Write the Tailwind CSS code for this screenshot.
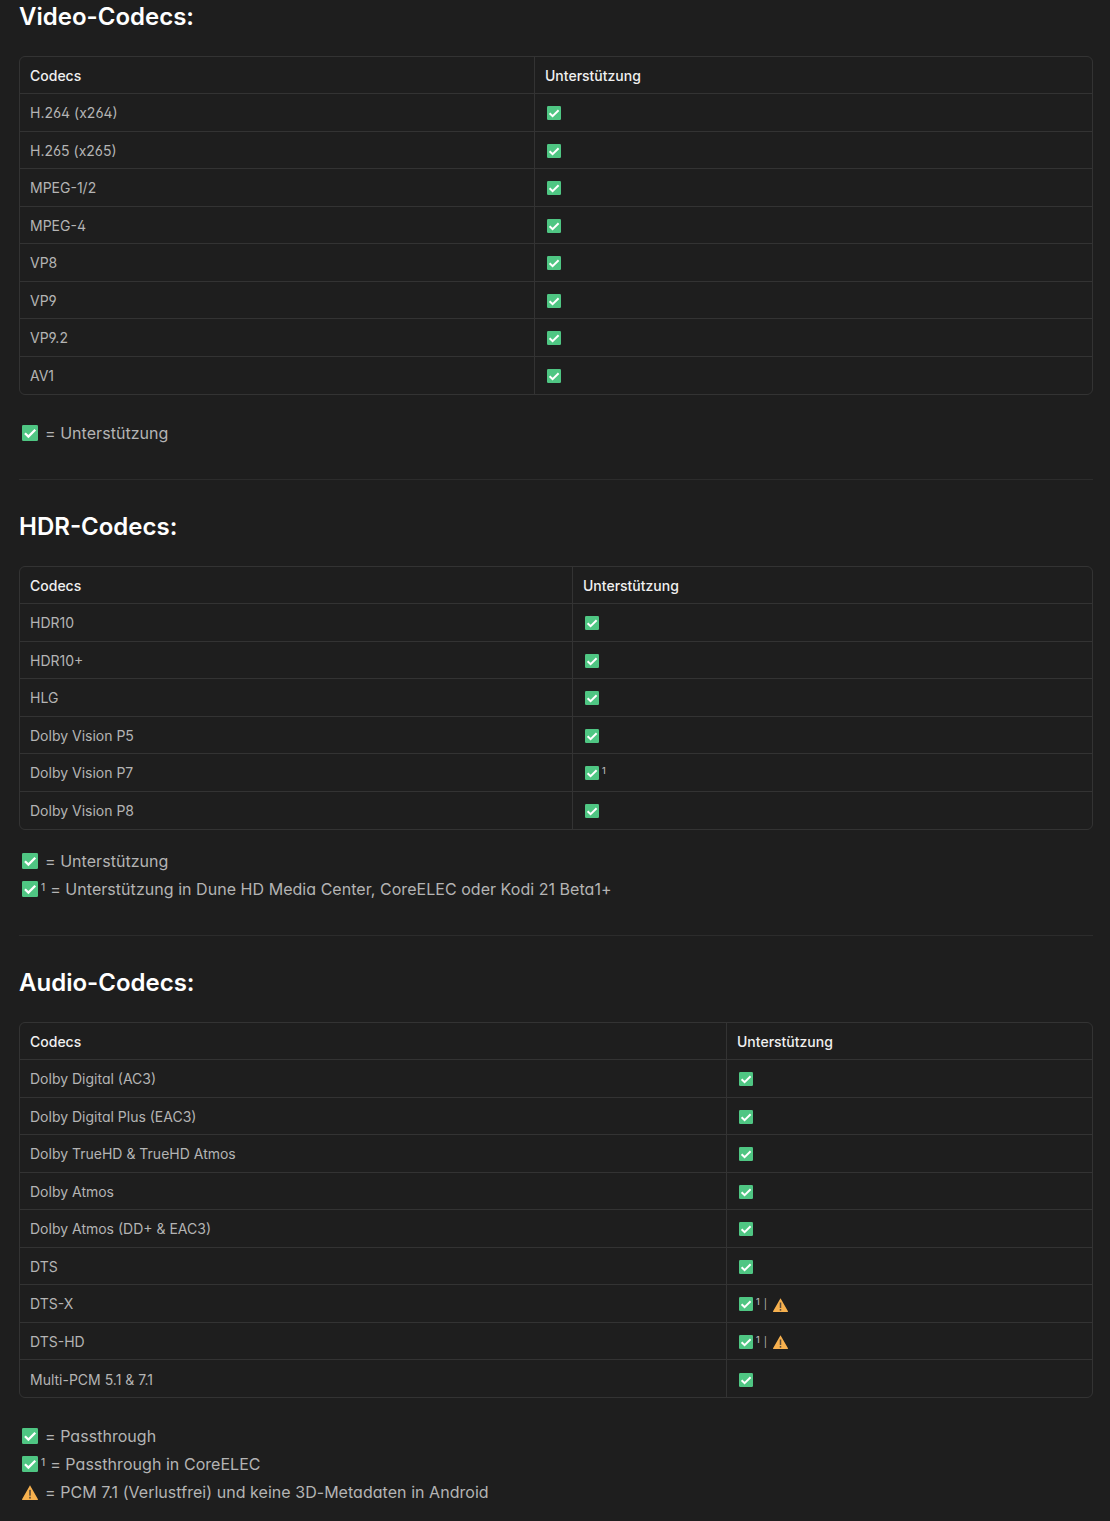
<!DOCTYPE html>
<html lang="de">
<head>
<meta charset="utf-8">
<title>Codecs</title>
<script src="https://cdn.jsdelivr.net/npm/@tailwindcss/browser@4"></script>
</head>
<body class="bg-[#1e1e1e] text-[#b4b4b4] [font-family:Inter,sans-serif] [font-feature-settings:'cv02','cv03','cv04','cv11']">
<svg class="hidden" aria-hidden="true">
  <symbol id="chk" viewBox="0 0 14 14"><rect width="14" height="14" rx="1.2" fill="#4fc683"/><path d="M2.6 7.2 5.6 10.2 11.6 4.2" fill="none" stroke="#fff" stroke-width="2"/></symbol>
  <symbol id="warn" viewBox="0 0 16 14" preserveAspectRatio="none"><path d="M8 .3 15.8 13a.6.6 0 0 1-.5 1H.7a.6.6 0 0 1-.5-1Z" fill="#f6b04e"/><rect x="7.2" y="4.5" width="1.6" height="5.5" fill="#5a4a3a"/><rect x="7.2" y="11" width="1.6" height="1.7" fill="#5a4a3a"/></symbol>
</svg>
<main class="h-[1521px] overflow-hidden pl-[19px] pr-[17px]">

<h2 class="h-8 text-2xl leading-[34px] font-semibold text-white">Video-Codecs:</h2>
<div class="mt-6 rounded-md border border-[#333]">
<table class="w-full table-fixed border-collapse text-sm">
  <colgroup><col class="w-[514px]"><col></colgroup>
  <thead><tr class="h-[36.5px] text-left text-[#f0f0f0]"><th class="px-2.5 pt-[2px] font-[550]">Codecs</th><th class="border-l border-[#333] pl-[10.5px] pt-[2px] font-[550]">Unterstützung</th></tr></thead>
  <tbody class="[&_td]:pt-[2px]">
    <tr class="h-[37.5px] border-t border-[#333]"><td class="px-2.5">H.264 (x264)</td><td class="border-l border-[#333] pl-[11px]"><svg class="ml-[1.5px] size-3.5"><use href="#chk"/></svg></td></tr>
    <tr class="h-[37.5px] border-t border-[#333]"><td class="px-2.5">H.265 (x265)</td><td class="border-l border-[#333] pl-[11px]"><svg class="ml-[1.5px] size-3.5"><use href="#chk"/></svg></td></tr>
    <tr class="h-[37.5px] border-t border-[#333]"><td class="px-2.5">MPEG-1/2</td><td class="border-l border-[#333] pl-[11px]"><svg class="ml-[1.5px] size-3.5"><use href="#chk"/></svg></td></tr>
    <tr class="h-[37.5px] border-t border-[#333]"><td class="px-2.5">MPEG-4</td><td class="border-l border-[#333] pl-[11px]"><svg class="ml-[1.5px] size-3.5"><use href="#chk"/></svg></td></tr>
    <tr class="h-[37.5px] border-t border-[#333]"><td class="px-2.5">VP8</td><td class="border-l border-[#333] pl-[11px]"><svg class="ml-[1.5px] size-3.5"><use href="#chk"/></svg></td></tr>
    <tr class="h-[37.5px] border-t border-[#333]"><td class="px-2.5">VP9</td><td class="border-l border-[#333] pl-[11px]"><svg class="ml-[1.5px] size-3.5"><use href="#chk"/></svg></td></tr>
    <tr class="h-[37.5px] border-t border-[#333]"><td class="px-2.5">VP9.2</td><td class="border-l border-[#333] pl-[11px]"><svg class="ml-[1.5px] size-3.5"><use href="#chk"/></svg></td></tr>
    <tr class="h-[37.5px] border-t border-[#333]"><td class="px-2.5">AV1</td><td class="border-l border-[#333] pl-[11px]"><svg class="ml-[1.5px] size-3.5"><use href="#chk"/></svg></td></tr>
  </tbody>
</table>
</div>
<div class="mt-6 leading-7 tracking-[0.04px]">
  <p class="flex items-center"><svg class="ml-[3px] mr-[7px] size-4"><use href="#chk"/></svg>= Unterstützung</p>
</div>
<hr class="mt-8 border-[#2c2c2c]">

<h2 class="mt-[30.5px] h-8 text-2xl leading-[34px] font-semibold text-white">HDR-Codecs:</h2>
<div class="mt-6 rounded-md border border-[#333]">
<table class="w-full table-fixed border-collapse text-sm">
  <colgroup><col class="w-[552px]"><col></colgroup>
  <thead><tr class="h-[36.5px] text-left text-[#f0f0f0]"><th class="px-2.5 pt-[2px] font-[550]">Codecs</th><th class="border-l border-[#333] pl-[10.5px] pt-[2px] font-[550]">Unterstützung</th></tr></thead>
  <tbody class="[&_td]:pt-[2px]">
    <tr class="h-[37.5px] border-t border-[#333]"><td class="px-2.5">HDR10</td><td class="border-l border-[#333] pl-[11px]"><svg class="ml-[1.5px] size-3.5"><use href="#chk"/></svg></td></tr>
    <tr class="h-[37.5px] border-t border-[#333]"><td class="px-2.5">HDR10+</td><td class="border-l border-[#333] pl-[11px]"><svg class="ml-[1.5px] size-3.5"><use href="#chk"/></svg></td></tr>
    <tr class="h-[37.5px] border-t border-[#333]"><td class="px-2.5">HLG</td><td class="border-l border-[#333] pl-[11px]"><svg class="ml-[1.5px] size-3.5"><use href="#chk"/></svg></td></tr>
    <tr class="h-[37.5px] border-t border-[#333]"><td class="px-2.5">Dolby Vision P5</td><td class="border-l border-[#333] pl-[11px]"><svg class="ml-[1.5px] size-3.5"><use href="#chk"/></svg></td></tr>
    <tr class="h-[37.5px] border-t border-[#333]"><td class="px-2.5">Dolby Vision P7</td><td class="border-l border-[#333] pl-[11px]"><span class="flex items-start"><svg class="ml-[1.5px] size-3.5"><use href="#chk"/></svg><span class="ml-[3px] text-[9px] leading-[10px] font-medium">1</span></span></td></tr>
    <tr class="h-[37.5px] border-t border-[#333]"><td class="px-2.5">Dolby Vision P8</td><td class="border-l border-[#333] pl-[11px]"><svg class="ml-[1.5px] size-3.5"><use href="#chk"/></svg></td></tr>
  </tbody>
</table>
</div>
<div class="mt-[17.5px] leading-7 tracking-[0.04px]">
  <p class="flex items-center"><svg class="ml-[3px] mr-[7px] size-4"><use href="#chk"/></svg>= Unterstützung</p>
  <p class="flex items-center"><svg class="ml-[3px] size-4"><use href="#chk"/></svg><span class="mb-1 ml-[3px] mr-[5px] text-[10px] leading-none font-medium">1</span>= Unterstützung in Dune HD Media Center, CoreELEC oder Kodi 21 Beta1+</p>
</div>
<hr class="mt-8 border-[#2c2c2c]">

<h2 class="mt-[30px] h-8 text-2xl leading-[34px] font-semibold text-white">Audio-Codecs:</h2>
<div class="mt-6 rounded-md border border-[#333]">
<table class="w-full table-fixed border-collapse text-sm">
  <colgroup><col class="w-[706px]"><col></colgroup>
  <thead><tr class="h-[36.5px] text-left text-[#f0f0f0]"><th class="px-2.5 pt-[2px] font-[550]">Codecs</th><th class="border-l border-[#333] pl-[10.5px] pt-[2px] font-[550]">Unterstützung</th></tr></thead>
  <tbody class="[&_td]:pt-[2px]">
    <tr class="h-[37.5px] border-t border-[#333]"><td class="px-2.5">Dolby Digital (AC3)</td><td class="border-l border-[#333] pl-[11px]"><svg class="ml-[1.5px] size-3.5"><use href="#chk"/></svg></td></tr>
    <tr class="h-[37.5px] border-t border-[#333]"><td class="px-2.5">Dolby Digital Plus (EAC3)</td><td class="border-l border-[#333] pl-[11px]"><svg class="ml-[1.5px] size-3.5"><use href="#chk"/></svg></td></tr>
    <tr class="h-[37.5px] border-t border-[#333]"><td class="px-2.5">Dolby TrueHD &amp; TrueHD Atmos</td><td class="border-l border-[#333] pl-[11px]"><svg class="ml-[1.5px] size-3.5"><use href="#chk"/></svg></td></tr>
    <tr class="h-[37.5px] border-t border-[#333]"><td class="px-2.5">Dolby Atmos</td><td class="border-l border-[#333] pl-[11px]"><svg class="ml-[1.5px] size-3.5"><use href="#chk"/></svg></td></tr>
    <tr class="h-[37.5px] border-t border-[#333]"><td class="px-2.5">Dolby Atmos (DD+ &amp; EAC3)</td><td class="border-l border-[#333] pl-[11px]"><svg class="ml-[1.5px] size-3.5"><use href="#chk"/></svg></td></tr>
    <tr class="h-[37.5px] border-t border-[#333]"><td class="px-2.5">DTS</td><td class="border-l border-[#333] pl-[11px]"><svg class="ml-[1.5px] size-3.5"><use href="#chk"/></svg></td></tr>
    <tr class="h-[37.5px] border-t border-[#333]"><td class="px-2.5">DTS-X</td><td class="border-l border-[#333] pl-[11px]"><span class="flex items-center"><svg class="ml-[1.5px] size-3.5"><use href="#chk"/></svg><span class="mb-1 ml-[3px] text-[9px] leading-[10px] font-medium">1</span><span class="ml-1 text-[10px] leading-none">|</span><svg class="ml-[5.5px] mt-px h-3.5 w-[15px]"><use href="#warn"/></svg></span></td></tr>
    <tr class="h-[37.5px] border-t border-[#333]"><td class="px-2.5">DTS-HD</td><td class="border-l border-[#333] pl-[11px]"><span class="flex items-center"><svg class="ml-[1.5px] size-3.5"><use href="#chk"/></svg><span class="mb-1 ml-[3px] text-[9px] leading-[10px] font-medium">1</span><span class="ml-1 text-[10px] leading-none">|</span><svg class="ml-[5.5px] mt-px h-3.5 w-[15px]"><use href="#warn"/></svg></span></td></tr>
    <tr class="h-[37.5px] border-t border-[#333]"><td class="px-2.5">Multi-PCM 5.1 &amp; 7.1</td><td class="border-l border-[#333] pl-[11px]"><svg class="ml-[1.5px] size-3.5"><use href="#chk"/></svg></td></tr>
  </tbody>
</table>
</div>
<div class="mt-6 leading-7 tracking-[0.04px]">
  <p class="flex items-center"><svg class="ml-[3px] mr-[7px] size-4"><use href="#chk"/></svg>= Passthrough</p>
  <p class="flex items-center"><svg class="ml-[3px] size-4"><use href="#chk"/></svg><span class="mb-1 ml-[3px] mr-[5px] text-[10px] leading-none font-medium">1</span>= Passthrough in CoreELEC</p>
  <p class="flex items-center"><svg class="ml-[3px] mr-[7px] h-[15px] w-4"><use href="#warn"/></svg>= PCM 7.1 (Verlustfrei) und keine 3D-Metadaten in Android</p>
</div>
</main>
</body>
</html>
